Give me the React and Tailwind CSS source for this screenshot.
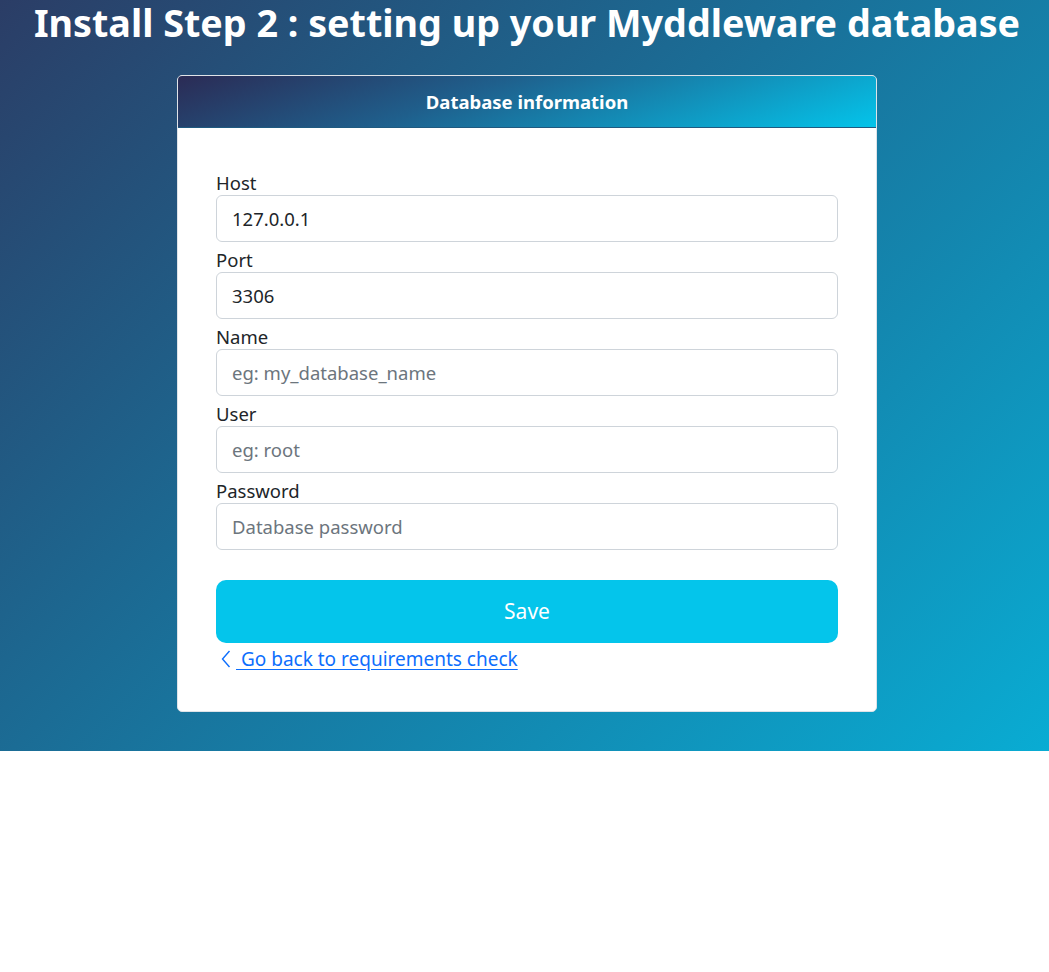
const fields = [
  { label: 'Host', value: '127.0.0.1' },
  { label: 'Port', value: '3306' },
  { label: 'Name', placeholder: 'eg: my_database_name' },
  { label: 'User', placeholder: 'eg: root' },
  { label: 'Password', placeholder: 'Database password', type: 'password' },
];

export default function App() {
  return (
    <div className="min-h-[972px] bg-white font-['Noto_Sans',sans-serif]">
      <div className="h-[751px] pl-[5px] bg-[linear-gradient(135deg,#2b3d66_0%,#1a6f98_45%,#09acd3_100%)]">
        <h1 className="text-center text-white font-bold text-[37.7px] leading-[46px] mb-[29px]">
          Install Step 2 : setting up your Myddleware database
        </h1>
        <div className="mx-auto w-[700px] bg-white rounded-[5px] border border-[#dfe3e8] overflow-hidden">
          <div className="h-[52px] flex items-center justify-center bg-[linear-gradient(160deg,#2b2b55_0%,#1f5f8c_40%,#04c4ea_100%)] border-b border-[#1f5a80]">
            <span className="text-white font-bold text-[18.5px]">Database information</span>
          </div>
          <form className="px-[38px] pt-[43px] pb-[39px]" onSubmit={(e) => e.preventDefault()}>
            {fields.map((f) => (
              <div key={f.label} className="mb-[6px]">
                <label className="block text-[18.5px] leading-[24px] text-[#212529]">{f.label}</label>
                <input
                  type={f.type || 'text'}
                  defaultValue={f.value}
                  placeholder={f.placeholder}
                  className="block w-full h-[47px] px-[15px] text-[18.5px] text-[#212529] placeholder:text-[#6c757d] border border-[#ced4da] rounded-[6px] outline-none bg-white"
                />
              </div>
            ))}
            <button className="mt-[24px] w-full h-[63px] rounded-[10px] bg-[#04c5eb] text-white text-[21px]">
              Save
            </button>
            <a href="#" className="mt-[3px] flex items-center text-[#0d6efd] text-[19px] leading-[26px] underline underline-offset-[3px]">
              <svg width="10" height="18" viewBox="0 0 10 18" fill="none" stroke="currentColor" strokeWidth="1.4" className="ml-[5px] shrink-0">
                <path d="M8.5 1 L1.5 9 L8.5 17" />
              </svg>
              <span className="ml-[5px]">&nbsp;Go back to requirements check</span>
            </a>
          </form>
        </div>
      </div>
    </div>
  );
}
